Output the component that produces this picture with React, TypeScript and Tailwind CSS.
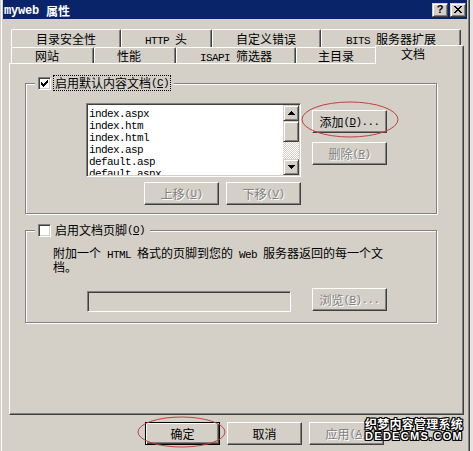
import React from "react";

const L = ({ children }: { children: React.ReactNode }) => (
  <span className="font-['Liberation_Mono',monospace] text-[11px] tracking-[-0.6px]">{children}</span>
);

const U = ({ children }: { children: React.ReactNode }) => (
  <span className="underline underline-offset-[1px]">{children}</span>
);

function Btn({
  children,
  disabled,
  def,
}: {
  children: React.ReactNode;
  disabled?: boolean;
  def?: boolean;
}) {
  return (
    <div
      className={`flex items-center justify-center w-[75px] h-[23px] shrink-0 whitespace-nowrap bg-[#d4d0c8] ${
        def
          ? "border border-black shadow-[inset_1px_1px_0_#fff,inset_-1px_-1px_0_#404040,inset_-2px_-2px_0_#808080]"
          : "border border-t-white border-l-white border-r-[#404040] border-b-[#404040] shadow-[inset_-1px_-1px_0_#808080]"
      } ${disabled ? "text-[#808080] [text-shadow:1px_1px_0_#fff]" : "text-black"}`}
    >
      {children}
    </div>
  );
}

function Check({ checked }: { checked?: boolean }) {
  return (
    <div className="w-[13px] h-[13px] shrink-0 bg-white border border-t-[#808080] border-l-[#808080] border-r-white border-b-white shadow-[inset_1px_1px_0_#404040,inset_-1px_-1px_0_#d4d0c8] flex items-center justify-center">
      {checked && (
        <svg width="7" height="7" viewBox="0 0 7 7" shapeRendering="crispEdges">
          <rect x="6" y="0" width="1" height="3" fill="#000" />
          <rect x="5" y="1" width="1" height="3" fill="#000" />
          <rect x="4" y="2" width="1" height="3" fill="#000" />
          <rect x="3" y="3" width="1" height="3" fill="#000" />
          <rect x="2" y="4" width="1" height="3" fill="#000" />
          <rect x="1" y="3" width="1" height="3" fill="#000" />
          <rect x="0" y="2" width="1" height="3" fill="#000" />
        </svg>
      )}
    </div>
  );
}

function ScrollBtn({ children, h }: { children?: React.ReactNode; h: string }) {
  return (
    <div
      className={`w-[16px] ${h} shrink-0 bg-[#d4d0c8] border border-t-[#d4d0c8] border-l-[#d4d0c8] border-r-[#404040] border-b-[#404040] shadow-[inset_1px_1px_0_#fff,inset_-1px_-1px_0_#808080] flex items-center justify-center`}
    >
      {children}
    </div>
  );
}

function CapBtn({ children }: { children: React.ReactNode }) {
  return (
    <div className="w-[16px] h-[14px] bg-[#d4d0c8] border border-t-[#d4d0c8] border-l-[#d4d0c8] border-r-[#404040] border-b-[#404040] shadow-[inset_1px_1px_0_#fff,inset_-1px_-1px_0_#808080] flex items-center justify-center">
      {children}
    </div>
  );
}

const xPixels = [
  [0, 0], [1, 0], [6, 0], [7, 0],
  [1, 1], [2, 1], [5, 1], [6, 1],
  [2, 2], [3, 2], [4, 2], [5, 2],
  [3, 3], [4, 3],
  [2, 4], [3, 4], [4, 4], [5, 4],
  [1, 5], [2, 5], [5, 5], [6, 5],
  [0, 6], [1, 6], [6, 6], [7, 6],
];

function BackTab({ w, pl, children }: { w: string; pl: string; children: React.ReactNode }) {
  return (
    <div
      className={`${w} ${pl} h-[18px] shrink-0 whitespace-nowrap border-t border-l border-r border-t-white border-l-white border-r-[#404040] shadow-[inset_-1px_0_0_#808080] rounded-tl-[2px] rounded-tr-[2px] pt-[3px]`}
    >
      {children}
    </div>
  );
}

function FrontTab({ w, pl, children }: { w: string; pl: string; children: React.ReactNode }) {
  return (
    <div
      className={`${w} ${pl} h-[16px] shrink-0 whitespace-nowrap border-t border-l border-r border-t-white border-l-white border-r-[#404040] shadow-[inset_-1px_0_0_#808080] rounded-tl-[2px] rounded-tr-[2px] pt-[2px]`}
    >
      {children}
    </div>
  );
}

const items = ["index.aspx", "index.htm", "index.html", "index.asp", "default.asp", "default.aspx"];

export default function App() {
  return (
    <div className="w-[473px] h-[451px] bg-[#e6e4e0] overflow-hidden font-['Noto_Sans_CJK_SC',sans-serif] text-[12px] leading-[12px] text-black">
      <div className="relative w-[470px] h-[451px] bg-[#d4d0c8] shadow-[inset_1px_0_0_#d4d0c8,inset_2px_0_0_#fff,inset_-1px_0_0_#404040,inset_-2px_0_0_#808080]">
        {/* Title bar */}
        <div className="ml-[3px] w-[464px] h-[19px] bg-[#0a246a] flex items-center justify-between pl-[1px] pr-[1px]">
          <div className="text-white font-bold pt-[3px] flex items-center whitespace-nowrap">
            <span className="font-['Liberation_Mono',monospace] text-[12px] tracking-[-0.2px]">myweb</span>
            <span className="ml-[7px]">属性</span>
          </div>
          <div className="flex gap-[2px]">
            <CapBtn>
              <span className="font-['Liberation_Sans',sans-serif] font-bold text-[11px] leading-[11px] text-black">?</span>
            </CapBtn>
            <CapBtn>
              <svg width="8" height="7" viewBox="0 0 8 7" shapeRendering="crispEdges">
                {xPixels.map(([x, y]) => (
                  <rect key={`${x}-${y}`} x={x} y={y} width="1" height="1" fill="#000" />
                ))}
              </svg>
            </CapBtn>
          </div>
        </div>

        {/* Tabs back row */}
        <div className="mt-[10px] ml-[11px] flex h-[18px]">
          <BackTab w="w-[110px]" pl="pl-[24px]">目录安全性</BackTab>
          <BackTab w="w-[91px]" pl="pl-[23px]">
            <L>HTTP </L>头
          </BackTab>
          <BackTab w="w-[109px]" pl="pl-[23px]">自定义错误</BackTab>
          <BackTab w="w-[140px]" pl="pl-[24px]">
            <L>BITS </L>服务器扩展
          </BackTab>
        </div>

        {/* Tabs front row */}
        <div className="ml-[11px] flex h-[16px]">
          <FrontTab w="w-[83px]" pl="pl-[23px]">网站</FrontTab>
          <FrontTab w="w-[82px]" pl="pl-[22px]">性能</FrontTab>
          <FrontTab w="w-[120px]" pl="pl-[23px]">
            <L>ISAPI </L>筛选器
          </FrontTab>
          <FrontTab w="w-[81px]" pl="pl-[21px]">主目录</FrontTab>
          <div className="relative z-10 -ml-[2px] -mt-[2px] w-[89px] h-[19px] shrink-0 pl-[25px] pt-[2px] bg-[#d4d0c8] border-t border-l border-r border-t-white border-l-white border-r-[#404040] shadow-[inset_-1px_0_0_#808080] rounded-tl-[2px] rounded-tr-[2px]">
            文档
          </div>
        </div>

        {/* Tab page */}
        <div className="ml-[9px] w-[455px] h-[352px] border border-t-white border-l-white border-r-[#404040] border-b-[#404040] shadow-[inset_-1px_-1px_0_#808080]">
          {/* Group 1 */}
          <div className="mt-[19px] ml-[15px] w-[412px] h-[131px] border border-[#808080] shadow-[1px_1px_0_#fff,inset_1px_1px_0_#fff]">
            <div className="-mt-[9px] ml-[9px] w-fit h-[16px] px-[3px] bg-[#d4d0c8] flex items-center">
              <Check checked />
              <div className="ml-[2px] h-[16px] border border-dotted border-black px-[1px] flex items-center whitespace-nowrap">
                启用默认内容文档
                <L>
                  (<U>C</U>)
                </L>
              </div>
            </div>
            <div className="mt-[12px] flex">
              <div className="ml-[60px] w-[215px]">
                <div className="w-[215px] h-[74px] p-[1px] bg-white border border-t-[#808080] border-l-[#808080] border-r-white border-b-white shadow-[inset_1px_1px_0_#404040,inset_-1px_-1px_0_#d4d0c8] flex">
                  <div className="flex-1 overflow-hidden pl-[1px] pt-[1px]">
                    {items.map((it) => (
                      <div key={it} className="h-[12px] leading-[12px] whitespace-nowrap">
                        <L>{it}</L>
                      </div>
                    ))}
                  </div>
                  <div className="w-[16px] flex flex-col">
                    <ScrollBtn h="h-[16px]">
                      <svg width="7" height="4" viewBox="0 0 7 4" shapeRendering="crispEdges">
                        <rect x="3" y="0" width="1" height="1" fill="#000" />
                        <rect x="2" y="1" width="3" height="1" fill="#000" />
                        <rect x="1" y="2" width="5" height="1" fill="#000" />
                        <rect x="0" y="3" width="7" height="1" fill="#000" />
                      </svg>
                    </ScrollBtn>
                    <ScrollBtn h="h-[21px]" />
                    <div className="flex-1 bg-[image:conic-gradient(#fff_25%,#d4d0c8_0_50%,#fff_0_75%,#d4d0c8_0)] bg-[length:2px_2px]" />
                    <ScrollBtn h="h-[16px]">
                      <svg width="7" height="4" viewBox="0 0 7 4" shapeRendering="crispEdges">
                        <rect x="0" y="0" width="7" height="1" fill="#000" />
                        <rect x="1" y="1" width="5" height="1" fill="#000" />
                        <rect x="2" y="2" width="3" height="1" fill="#000" />
                        <rect x="3" y="3" width="1" height="1" fill="#000" />
                      </svg>
                    </ScrollBtn>
                  </div>
                </div>
                <div className="mt-[5px] flex justify-end gap-[7px]">
                  <Btn disabled>
                    上移
                    <L>
                      (<U>U</U>)
                    </L>
                  </Btn>
                  <Btn disabled>
                    下移
                    <L>
                      (<U>V</U>)
                    </L>
                  </Btn>
                </div>
              </div>
              <div className="ml-[11px] flex flex-col">
                <div className="mt-[7px]">
                  <Btn>
                    添加
                    <L>
                      (<U>D</U>)...
                    </L>
                  </Btn>
                </div>
                <div className="mt-[9px]">
                  <Btn disabled>
                    删除
                    <L>
                      (<U>R</U>)
                    </L>
                  </Btn>
                </div>
              </div>
            </div>
          </div>

          {/* Group 2 */}
          <div className="mt-[16px] ml-[15px] w-[412px] h-[93px] border border-[#808080] shadow-[1px_1px_0_#fff,inset_1px_1px_0_#fff]">
            <div className="-mt-[9px] ml-[9px] w-fit h-[16px] px-[3px] bg-[#d4d0c8] flex items-center">
              <Check />
              <div className="ml-[2px] h-[16px] border border-transparent px-[1px] flex items-center whitespace-nowrap">
                启用文档页脚
                <L>
                  (<U>O</U>)
                </L>
              </div>
            </div>
            <div className="ml-[27px] mt-[9px] w-[336px] leading-[12px]">
              附加一个<L> HTML </L>格式的页脚到您的<L> Web </L>服务器返回的每一个文档。
            </div>
            <div className="mt-[15px] flex items-start">
              <div className="ml-[61px] mt-[3px] w-[204px] h-[21px] bg-[#d4d0c8] border border-t-[#808080] border-l-[#808080] border-r-white border-b-white shadow-[inset_1px_1px_0_#404040,inset_-1px_-1px_0_#d4d0c8]" />
              <div className="ml-[21px]">
                <Btn disabled>
                  浏览
                  <L>
                    (<U>B</U>)...
                  </L>
                </Btn>
              </div>
            </div>
          </div>
        </div>

        {/* Bottom buttons */}
        <div className="mt-[7px] pl-[145px] flex gap-[7px]">
          <Btn def>确定</Btn>
          <Btn>取消</Btn>
          <Btn disabled>
            应用
            <L>
              (<U>A</U>)
            </L>
          </Btn>
        </div>

        {/* Red annotation ellipses */}
        <svg className="absolute left-[301px] top-[101px]" width="99" height="38" viewBox="0 0 99 38">
          <ellipse cx="49" cy="18.5" rx="48" ry="17.5" fill="none" stroke="#c2403f" strokeWidth="1" />
        </svg>
        <svg className="absolute left-[137px] top-[416px]" width="90" height="33" viewBox="0 0 90 33">
          <ellipse cx="44.5" cy="16" rx="43.5" ry="15" fill="none" stroke="#c2403f" strokeWidth="1" />
        </svg>

        {/* Watermark */}
        <div className="absolute left-[365px] top-[417px] flex flex-col text-white font-bold whitespace-nowrap [text-shadow:1px_0_0_#000,-1px_0_0_#000,0_1px_0_#000,0_-1px_0_#000,1px_1px_0_#000,-1px_-1px_0_#000,1px_-1px_0_#000,-1px_1px_0_#000]">
          <div className="text-[12px] leading-[14px] tracking-[0.25px]">织梦内容管理系统</div>
          <div className="font-['Liberation_Sans',sans-serif] text-[11px] leading-[11px] tracking-[1.3px]">DEDECMS.COM</div>
        </div>
      </div>
    </div>
  );
}
